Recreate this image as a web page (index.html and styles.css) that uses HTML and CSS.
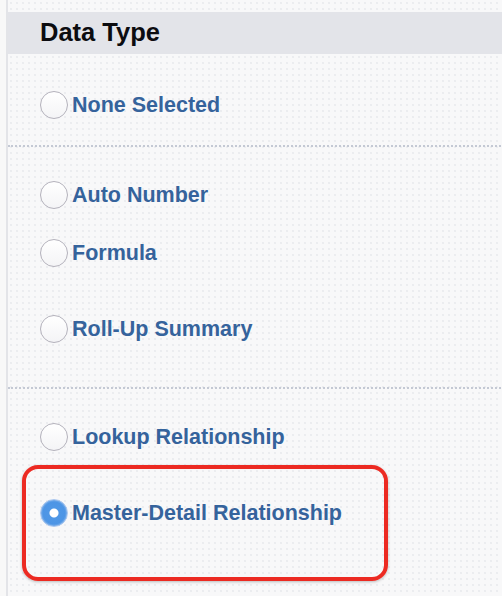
FILE: index.html
```html
<!DOCTYPE html>
<html>
<head>
<meta charset="utf-8">
<link rel="stylesheet" href="styles.css">
</head>
<body>
<div class="page">
  <div class="topstrip"></div>
  <div class="header">Data Type</div>
  <div class="section s1">
    <label class="row"><span class="radio"></span><span class="lbl">None Selected</span></label>
  </div>
  <div class="section s2">
    <label class="row"><span class="radio"></span><span class="lbl">Auto Number</span></label>
    <label class="row r-formula"><span class="radio"></span><span class="lbl">Formula</span></label>
    <label class="row r-rollup"><span class="radio"></span><span class="lbl">Roll-Up Summary</span></label>
  </div>
  <div class="section s3">
    <label class="row"><span class="radio"></span><span class="lbl">Lookup Relationship</span></label>
    <label class="row r-master"><span class="radio checked"></span><span class="lbl">Master-Detail Relationship</span></label>
    <div class="highlight"></div>
  </div>
</div>
</body>
</html>
```
FILE: styles.css
```css
html, body {
  margin: 0;
  padding: 0;
  background: #f8f8f8;
}
.page {
  width: 502px;
  height: 596px;
  box-sizing: border-box;
  margin-left: 6px;
  border-left: 2px solid #e3e4e8;
  background-color: #f8f8f9;
  background-image: radial-gradient(circle, #e4e6ea 0.6px, transparent 0.9px);
  background-size: 6px 6px;
  font-family: "Liberation Sans", Arial, sans-serif;
  overflow: hidden;
}
.topstrip {
  height: 12px;
}
.header {
  height: 42px;
  background: #e3e4e9;
  color: #0c0c10;
  font-weight: bold;
  font-size: 25.5px;
  line-height: 41px;
  padding-left: 32px;
}
.section {
  position: relative;
  display: flex;
  flex-direction: column;
  padding-left: 32px;
  box-sizing: border-box;
}
.s1 {
  height: 93px;
  padding-top: 37px;
  border-bottom: 2px dotted #c4c9d4;
}
.s2 {
  height: 242px;
  padding-top: 34px;
  border-bottom: 2px dotted #c4c9d4;
}
.s3 {
  padding-top: 34px;
  height: 206px;
}
.row {
  display: flex;
  align-items: center;
  height: 28px;
  gap: 4px;
}
.r-formula { margin-top: 30px; }
.r-rollup { margin-top: 48px; }
.r-master { margin-top: 48px; }
.radio {
  width: 26px;
  height: 26px;
  border-radius: 50%;
  border: 1px solid #b4b2bc;
  background: linear-gradient(#ffffff, #f4f4f6);
  flex: none;
}
.radio.checked {
  border: 1px solid #a9c6ee;
  background: radial-gradient(circle, #ffffff 0, #ffffff 4px, #4f97e6 5px, #4d95e5 11px, #79aeea 13px);
}
.lbl {
  color: #35639c;
  font-weight: bold;
  font-size: 21.5px;
  line-height: 28px;
}
.highlight {
  position: absolute;
  left: 14px;
  top: 76px;
  width: 366px;
  height: 116px;
  box-sizing: border-box;
  border: 4px solid #ec2a22;
  border-radius: 16px;
  box-shadow: 0 1px 3px rgba(0,0,0,0.25);
}
```
